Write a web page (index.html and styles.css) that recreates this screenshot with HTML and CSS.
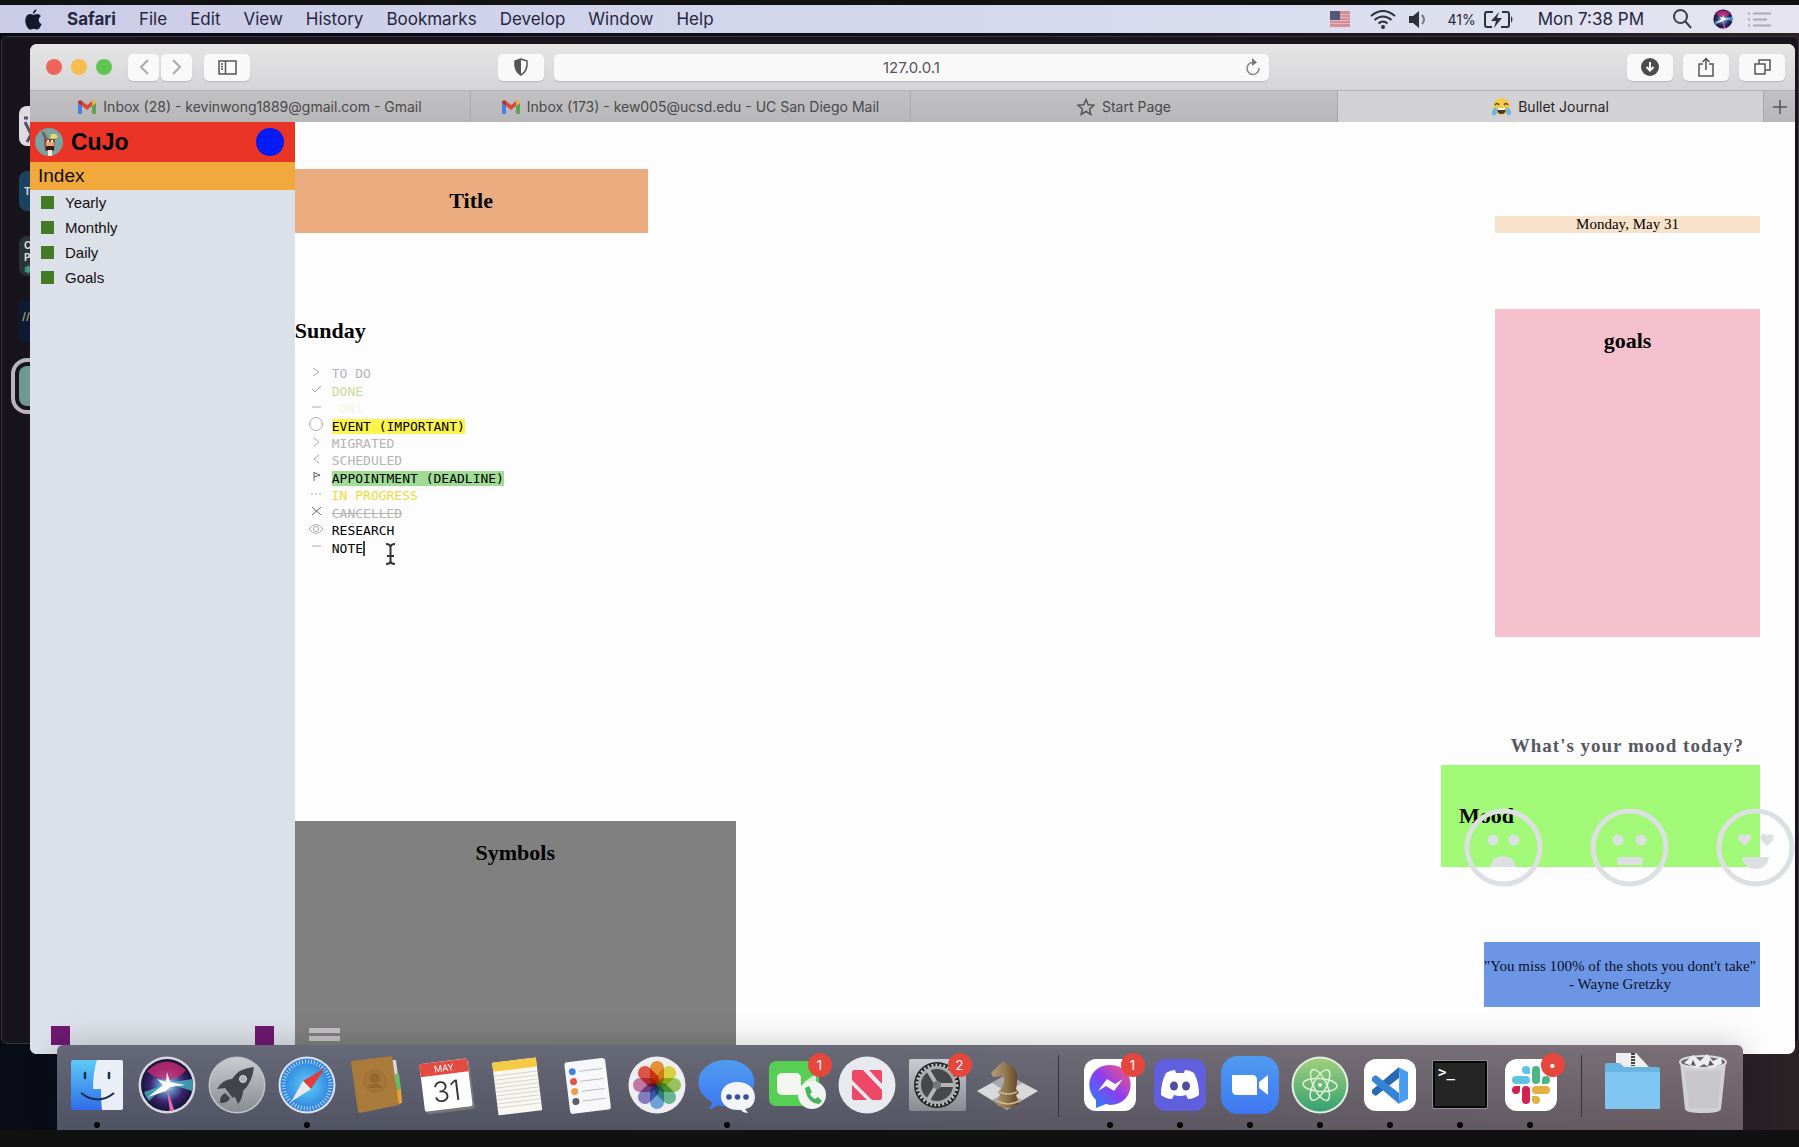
FILE: index.html
```html
<!DOCTYPE html>
<html lang="en">
<head>
<meta charset="utf-8">
<title>Bullet Journal</title>
<link rel="stylesheet" href="styles.css">
</head>
<body>
<svg class="defs" aria-hidden="true">
  <defs>
    <linearGradient id="silver" x1="0" y1="0" x2="0" y2="1"><stop offset="0" stop-color="#c9cbd0"/><stop offset="1" stop-color="#888c91"/></linearGradient>
    <linearGradient id="blue" x1="0" y1="0" x2="0" y2="1"><stop offset="0" stop-color="#4f9bf0"/><stop offset="1" stop-color="#3e78f2"/></linearGradient>
    <linearGradient id="sky" x1="0" y1="0" x2="0" y2="1"><stop offset="0" stop-color="#5ecbf8"/><stop offset="1" stop-color="#2f6ce8"/></linearGradient>
    <linearGradient id="atomg" x1="0" y1="0" x2="0" y2="1"><stop offset="0" stop-color="#a0cf7c"/><stop offset="1" stop-color="#35a273"/></linearGradient>
    <linearGradient id="msgr" x1="0" y1="1" x2="1" y2="0"><stop offset="0" stop-color="#1a8dfa"/><stop offset=".5" stop-color="#8b3df2"/><stop offset="1" stop-color="#ff5a75"/></linearGradient>
    <linearGradient id="gold" x1="0" y1="0" x2="1" y2="0"><stop offset="0" stop-color="#b59d76"/><stop offset=".5" stop-color="#957a52"/><stop offset="1" stop-color="#5e4224"/></linearGradient>
    <radialGradient id="siri"><stop offset="0" stop-color="#e9fbff"/><stop offset=".3" stop-color="#568fc2"/><stop offset=".65" stop-color="#3c2470"/><stop offset="1" stop-color="#151436"/></radialGradient>
    <radialGradient id="safari"><stop offset="0" stop-color="#5fd0f5"/><stop offset="1" stop-color="#2c7de0"/></radialGradient>
    <symbol id="gmail" viewBox="0 0 18 14">
      <path fill="#4a7de8" d="M0 3l4 3v8H1.500Q0 14 0 12.500z"/><path fill="#5da04f" d="M18 3l-4 3v8h2.500Q18 14 18 12.500z"/>
      <path fill="#d9493c" d="M4 1l5 4 5-4v5l-5 4-5-4z"/><path fill="#a8352f" d="M0 2q1-3 4-1v5L0 3z"/><path fill="#e4b23b" d="M18 2q-1-3-4-1v5l4-3z"/>
    </symbol>
    <symbol id="siriball" viewBox="0 0 60 60">
      <circle cx="30" cy="30" r="28.500" fill="#d9d7de"/><circle cx="30" cy="30" r="26" fill="url(#siri)"/>
      <path fill="#d02b72" opacity=".75" d="M10 16Q29-2 49 15 41 25 30 25 18 24 10 16z"/>
      <path fill="#4cc7d2" opacity=".7" d="M30 28l25-4q2 7 0 12zM30 29L7 37q2 6 5 9z"/>
      <path fill="#e66aad" d="M29 29l8 26-4 1z"/><path fill="#fff" d="M30 17l3 10 15 3-15 2-4 4-18 6 15-12-6-6 9 3z"/>
    </symbol>
  </defs>
</svg>

<header class="menubar">
  <nav class="menus" aria-label="Menu bar">
    <svg class="apple" width="17" height="21" viewBox="0 0 17 21"><path fill="#16182f" d="M11.500 0q0 3-3.600 5Q7.600 2 11.500 0zM8.600 6q2.700-1.500 5-.8 1.500.5 2.300 1.700-2.400 1.600-2.200 4.300.2 2.700 2.900 3.900-.8 2.500-2.500 4.500-1.400 1.500-3.300.7-2-.9-4.100 0-1.900.8-3.200-.6Q.300 16.300.300 11.800.500 5.600 5 5.100q1.500 0 3.600.9z"/></svg>
    <b>Safari</b><span>File</span><span>Edit</span><span>View</span><span>History</span><span>Bookmarks</span><span>Develop</span><span>Window</span><span>Help</span>
  </nav>
  <div class="status">
    <svg class="flag" width="20" height="16" viewBox="0 0 20 16"><path fill="#d58d98" d="M0 0h20v16H0z"/><path stroke="#e3b6bf" d="M0 3.500h20M0 6.500h20M0 9.500h20M0 12.500h20"/><path fill="#535775" d="M0 0h10v9H0z"/></svg>
    <svg class="wifi" width="26" height="19" viewBox="0 0 26 19" fill="none" stroke="#2e303c" stroke-width="2"><path d="M1 6q12-10 24 0M4.500 10q8.500-7 17 0M8.500 13.500q4.500-4 9 0"/><circle cx="13" cy="17" r="1"/></svg>
    <svg class="speaker" width="18" height="17" viewBox="0 0 18 17"><path fill="#2e303c" d="M0 5h4l6-5v17l-6-5H0z"/><path d="M13 4q4 4.500 0 9" fill="none" stroke="#777a86" stroke-width="2"/></svg>
    <span class="percent">41%</span>
    <svg class="battery" width="30" height="17" viewBox="0 0 30 17" fill="none" stroke="#2e303c" stroke-width="2"><path d="M9 1H3Q1 1 1 3v11q0 2 2 2h5M18 1h5q2 0 2 2v11q0 2-2 2h-6"/><path fill="#2e303c" stroke="none" d="M15 1L7 10h5l-2 7 8-10h-5zM27 5q3 3 0 7z"/></svg>
    <time>Mon 7:38 PM</time>
    <svg class="search" width="19" height="20" viewBox="0 0 19 20" fill="none" stroke="#3b3d47" stroke-width="2"><circle cx="7.500" cy="7.500" r="6.500"/><path d="M12 12l6 7"/></svg>
    <svg class="siri" width="22" height="22"><use href="#siriball"/></svg>
    <svg width="23" height="15" viewBox="0 0 23 15" stroke="#a9a9b8" stroke-width="2"><path d="M0 1.500h2M0 7.500h2M0 13.500h2M5 1.500h18M5 7.500h14M5 13.500h18"/></svg>
  </div>
</header>

<main class="desktop">
  <aside class="behind">
    <span class="server light"><svg width="40" height="40" viewBox="0 0 40 40" fill="none" stroke="#54506b" stroke-width="3"><path d="M6 16l10 20M20 14L8 36M5 12h4"/></svg></span>
    <span class="server navy">T</span>
    <span class="server slate">C<br>P<br><i>✱</i></span>
    <span class="server code">//</span>
    <span class="server current"></span>
  </aside>

  <section class="window">
    <div class="toolbar">
      <div class="lights"><i class="close"></i><i class="min"></i><i class="max"></i></div>
      <div class="history">
        <button aria-label="Back"><svg width="10" height="16" viewBox="0 0 10 16"><path d="M9 1L2 8l7 7" fill="none" stroke="#aaa9ab" stroke-width="2"/></svg></button>
        <button aria-label="Forward"><svg width="10" height="16" viewBox="0 0 10 16"><path d="M1 1l7 7-7 7" fill="none" stroke="#aaa9ab" stroke-width="2"/></svg></button>
      </div>
      <button class="wide" aria-label="Sidebar"><svg width="19" height="15" viewBox="0 0 19 15" fill="none" stroke="#555" stroke-width="1.500"><path d="M1 1h17v13H1zM7.500 1v13M3 4h2M3 6.500h2M3 9h2"/></svg></button>
      <div class="address">
        <button class="wide" aria-label="Privacy report"><svg width="16" height="18" viewBox="0 0 16 18"><path d="M8 1l6 2q1 10-6 14-7-4-6-14z" fill="none" stroke="#555" stroke-width="1.500"/><path d="M8 1v16Q1 13 2 3z" fill="#555"/></svg></button>
        <div class="urlbox">
          <input class="url" type="text" value="127.0.0.1" aria-label="Address">
          <svg class="reload" width="16" height="18" viewBox="0 0 16 18"><path d="M9 4.500A6 6 0 1 0 14 10" fill="none" stroke="#888" stroke-width="1.500"/><path d="M7 0l5 4.500L7 8z" fill="#777"/></svg>
        </div>
      </div>
      <div class="tools">
        <button class="wide" aria-label="Downloads"><svg width="18" height="18" viewBox="0 0 18 18"><circle cx="9" cy="9" r="9" fill="#4c4b4d"/><path d="M9 4v8M5.500 9L9 12.500 12.500 9" fill="none" stroke="#fff" stroke-width="2"/></svg></button>
        <button class="wide" aria-label="Share"><svg width="16" height="20" viewBox="0 0 16 20" fill="none" stroke="#555" stroke-width="1.500"><path d="M5 7H1v12h14V7h-4M8 13V2M4.500 5L8 1.500 11.500 5"/></svg></button>
        <button class="wide" aria-label="Show tabs"><svg width="17" height="16" viewBox="0 0 17 16" fill="none" stroke="#555" stroke-width="1.500"><path d="M1 5h10v10H1zM5 5V1h11v10h-5"/></svg></button>
      </div>
    </div>

    <nav class="tabs" aria-label="Tabs">
      <a href="#"><svg width="18" height="14"><use href="#gmail"/></svg>Inbox (28) - kevinwong1889@gmail.com - Gmail</a>
      <a href="#"><svg width="18" height="14"><use href="#gmail"/></svg>Inbox (173) - kew005@ucsd.edu - UC San Diego Mail</a>
      <a href="#"><svg width="18" height="18" viewBox="0 0 18 18"><path d="M9 1.500l2.200 5.200 5.600.5-4.200 3.700 1.200 5.500L9 13.500l-4.800 2.900 1.200-5.500L1.200 7.200l5.600-.5z" fill="none" stroke="#555" stroke-width="1.500"/></svg>Start Page</a>
      <a href="#" class="active"><svg width="19" height="18" viewBox="0 0 19 18"><circle cx="9.500" cy="8.500" r="8.500" fill="#f2cb4a"/><path d="M3 7q2-3 4 0M12 7q2-3 4 0" fill="none" stroke="#5c4523" stroke-width="1.500"/><path d="M5 10h9q0 6-4.500 6T5 10z" fill="#4c3420"/><path d="M5.500 10h8v2h-8z" fill="#fff"/><path d="M4 9q-5 3-4 7 3 3 5-1zM15 9q5 3 4 7-3 3-5-1z" fill="#66b4e8"/></svg>Bullet Journal</a>
      <button aria-label="New tab"><svg width="14" height="14" viewBox="0 0 14 14"><path d="M7 0v14M0 7h14" stroke="#555" stroke-width="1.500"/></svg></button>
    </nav>

    <div class="page">
      <aside class="sidebar">
        <header class="brand">
          <svg width="28" height="28" viewBox="0 0 28 28"><circle cx="14" cy="14" r="14" fill="#7ba2a2"/><path fill="#8c4a34" d="M9 11h11l-1 12H10z"/><path fill="#7c5a62" d="M6 3l3 1 4 7-3 1z"/><path fill="#e3dd60" d="M16 6h5l2 3-4 2-4-1z"/><path fill="#e2a877" d="M11 14h8v4h-8z"/><path fill="#3d1c1c" d="M11 18h8v4h-8z"/><path fill="#f1e7d2" d="M13 22h4v6h-4zM12 12h2v2h-2zM16 12h2v2h-2z"/></svg>
          <h1>CuJo</h1>
          <button class="blob" aria-label="Profile"></button>
        </header>
        <h2>Index</h2>
        <ul class="index">
          <li><a href="#">Yearly</a></li><li><a href="#">Monthly</a></li><li><a href="#">Daily</a></li><li><a href="#">Goals</a></li>
        </ul>
        <footer class="corners"><i></i><i></i></footer>
      </aside>

      <div class="journal">
        <section class="left">
          <h2 class="title">Title</h2>
          <h2 class="day">Sunday</h2>
          <ul class="bullets">
            <li><svg viewBox="0 0 16 16"><path d="M5 4l6 4-6 4"/></svg><span class="muted">TO DO</span></li>
            <li><svg viewBox="0 0 16 16"><path d="M4 8l3 3 6-6"/></svg><span class="done">DONE</span></li>
            <li><svg viewBox="0 0 16 16"><path d="M4 8h9"/></svg><span class="ghost">&nbsp;ONi</span></li>
            <li><svg viewBox="0 0 16 16"><circle cx="8" cy="8" r="6.500"/></svg><span class="event">EVENT (IMPORTANT)</span></li>
            <li><svg viewBox="0 0 16 16"><path d="M6 4l5 4-5 4"/></svg><span class="muted">MIGRATED</span></li>
            <li><svg viewBox="0 0 16 16"><path d="M11 4L6 8l5 4"/></svg><span class="muted">SCHEDULED</span></li>
            <li><svg class="dark" viewBox="0 0 16 16"><path d="M6 13V4M6 4.500l6 2.500-6 2"/></svg><span class="deadline">APPOINTMENT (DEADLINE)</span></li>
            <li><svg viewBox="0 0 16 16"><path d="M3 8h2M7 8h2M11 8h2"/></svg><span class="progress">IN PROGRESS</span></li>
            <li><svg class="dark" viewBox="0 0 16 16"><path d="M4 4l9 8M13 4l-9 8"/></svg><s class="muted">CANCELLED</s></li>
            <li><svg viewBox="0 0 16 16"><path d="M1 8q7-9 14 0-7 9-14 0z"/><circle cx="8" cy="8" r="2.500"/></svg><span>RESEARCH</span></li>
            <li><svg viewBox="0 0 16 16"><path d="M4 8h9"/></svg><span class="typing">NOTE</span><svg class="pointer" viewBox="0 0 11 22"><path d="M1 1q4 0 4.500 3Q6 1 10 1M5.500 4v14M1 21q4 0 4.500-3 .500 3 4.500 3M2 13h7"/></svg></li>
          </ul>
          <section class="symbols">
            <h2>Symbols</h2>
            <button class="menu" aria-label="Menu"></button>
          </section>
        </section>

        <section class="right">
          <time class="date">Monday, May 31</time>
          <section class="goals"><h2>goals</h2></section>
          <h3>What's your mood today?</h3>
          <section class="mood">
            <h2>Mood</h2>
            <div class="faces">
              <button aria-label="Sad"><svg viewBox="0 0 79 79"><circle class="ring" cx="39.500" cy="39.500" r="36.500"/><circle cx="29" cy="32" r="5.500"/><circle cx="50" cy="32" r="5.500"/><path d="M26 59q2-11 13-11t13 11z"/></svg></button>
              <button aria-label="Neutral"><svg viewBox="0 0 79 79"><circle class="ring" cx="39.500" cy="39.500" r="36.500"/><circle cx="28" cy="32" r="5.500"/><circle cx="51" cy="32" r="5.500"/><rect x="27" y="49" width="26" height="8" rx="3"/></svg></button>
              <button aria-label="Happy"><svg viewBox="0 0 79 79"><circle class="ring" cx="39.500" cy="39.500" r="36.500"/><path d="M28.500 38l-6-6q-2-4 2-6 3 0 4 2 1-2 4-2 4 2 2 6zM51 38l-6-6q-2-4 2-6 3 0 4 2 1-2 4-2 4 2 2 6zM26 49h27q-2 12-13.500 12T26 49z"/></svg></button>
            </div>
          </section>
          <blockquote>"You miss 100% of the shots you dont't take"<br>- Wayne Gretzky</blockquote>
        </section>
      </div>
    </div>
  </section>

  <nav class="dock" aria-label="Dock">
    <button class="open" aria-label="Finder"><svg viewBox="0 0 60 60"><rect x="4" y="5" width="52" height="50" rx="2" fill="url(#sky)"/><path fill="#e9eef7" d="M30 5h24q2 0 2 2v46q0 2-2 2H35q-1-8-1-21h-8Q26 17 30 5z"/><path d="M18 18v5M42 18v5" stroke="#17304f" stroke-width="2.500" stroke-linecap="round"/><path d="M14 38q17 13 33 0" fill="none" stroke="#172d52" stroke-width="2"/></svg></button>
    <button aria-label="Siri"><svg viewBox="0 0 60 60"><use href="#siriball"/></svg></button>
    <button aria-label="Launchpad"><svg viewBox="0 0 60 60"><circle cx="30" cy="30" r="28.500" fill="#bfc2c7"/><circle cx="30" cy="30" r="27" fill="url(#silver)"/><path fill="#434449" d="M47 12q-15 1-22 12-9 0-15 10l8-1 7 9-1 1 4-1 3 7q5-6 5-13 9-8 11-24zM18 38l5 5q-1 5-10 5 0-8 5-10z"/><circle cx="36" cy="24" r="3.500" fill="#aeb1b6" stroke="#ddd"/></svg></button>
    <button class="open" aria-label="Safari"><svg viewBox="0 0 60 60"><circle cx="30" cy="30" r="28.500" fill="#dfe3ee"/><circle cx="30" cy="30" r="26.500" fill="url(#safari)"/><circle cx="30" cy="30" r="23.500" fill="none" stroke="#b8dcf5" stroke-width="4" stroke-dasharray="1 2"/><path fill="#e13c3a" d="M48 13L34 34l-8-8z"/><path fill="#e9e9ed" d="M26 26l8 8-20 13z"/></svg></button>
    <button aria-label="Contacts"><svg viewBox="0 0 60 60"><path fill="#d8d8d8" d="M45 5l4 0 3 24-5 1z"/><path fill="#62bf63" d="M48 19l4 0 2 15-5 1z"/><path fill="#e3a53a" d="M49 35l5-1 1 14-7 2z"/><path fill="#aa7a3a" d="M4 6l41-5 7 49-39 8q-2 0-2-2L4 8z"/><circle cx="28" cy="26" r="11" fill="#a67636" stroke="#9a6d32"/><circle cx="28" cy="23" r="5" fill="#94672e"/><path fill="#94672e" d="M20 33q8-9 16 0z"/></svg></button>
    <button aria-label="Calendar"><svg viewBox="0 0 60 60"><g transform="rotate(-7 30 30)"><rect x="7" y="8" width="48" height="49" rx="2" fill="#777"/><rect x="5" y="6" width="48" height="48" rx="2" fill="#fff"/><path fill="#e34b42" d="M5 6h48v13H5z"/><text x="29" y="16" class="cal-month">MAY</text><text x="29" y="46" class="cal-day">31</text></g></svg></button>
    <button aria-label="Notes"><svg viewBox="0 0 60 60"><g transform="rotate(-7 30 30)"><rect x="8" y="5" width="44" height="53" rx="1" fill="#f8f7f2"/><path fill="#f5cb45" d="M8 5h44v9H8z"/><path stroke="#d6d5d0" d="M8 18.500h44M8 22.500h44M8 26.500h44M8 30.500h44M8 34.500h44M8 38.500h44M8 42.500h44M8 46.500h44M8 50.500h44"/></g></svg></button>
    <button aria-label="Reminders"><svg viewBox="0 0 60 60"><g transform="rotate(-7 30 30)"><rect x="10" y="5" width="41" height="52" rx="3" fill="#f8f8fa"/><circle cx="17" cy="15" r="3.500" fill="#4680ee"/><circle cx="17" cy="25" r="3.500" fill="#e3514b"/><circle cx="17" cy="35" r="3.500" fill="#ee9f4b"/><circle cx="17" cy="45" r="3.500" fill="#5b5e63"/><path stroke="#bbb" d="M24 15.500h23M24 25.500h23M24 35.500h23M24 45.500h23"/></g></svg></button>
    <button aria-label="Photos"><svg viewBox="0 0 60 60"><circle cx="30" cy="30" r="28.500" fill="#eeeef2"/><g class="petals"><rect x="23" y="6" width="14" height="24" rx="7" fill="#f19a38"/><rect x="23" y="6" width="14" height="24" rx="7" fill="#e9de45" transform="rotate(45 30 30)"/><rect x="23" y="6" width="14" height="24" rx="7" fill="#a3d060" transform="rotate(90 30 30)"/><rect x="23" y="6" width="14" height="24" rx="7" fill="#6fc297" transform="rotate(135 30 30)"/><rect x="23" y="6" width="14" height="24" rx="7" fill="#76aee2" transform="rotate(180 30 30)"/><rect x="23" y="6" width="14" height="24" rx="7" fill="#8c86ca" transform="rotate(225 30 30)"/><rect x="23" y="6" width="14" height="24" rx="7" fill="#cf7fac" transform="rotate(270 30 30)"/><rect x="23" y="6" width="14" height="24" rx="7" fill="#ea5a4c" transform="rotate(315 30 30)"/></g></svg></button>
    <button class="open" aria-label="Messages"><svg viewBox="0 0 60 60"><path fill="url(#blue)" d="M30 5c36 0 37 43 0 46-4 0-7 0-10-1q-3 4-9 4 4-3 4-7C-8 35-1 5 30 5z"/><path fill="#f4f5fa" d="M40 27c23 0 22 26 8 27l3 4q-5 0-7-3C18 57 18 27 40 27z"/><g fill="#35519e"><circle cx="32" cy="42" r="2.800"/><circle cx="40.500" cy="42" r="2.800"/><circle cx="49" cy="42" r="2.800"/></g></svg></button>
    <button aria-label="FaceTime"><svg viewBox="0 0 60 60"><rect x="2" y="6" width="50" height="45" rx="7" fill="#57cf55"/><rect x="10" y="18" width="24" height="22" rx="5" fill="#f4f6f2"/><path fill="#d7efd3" d="M37 27l12-8v20z"/><circle cx="45" cy="40" r="14" fill="#f1f4f1"/><path fill="#45b65b" d="M38 33l4-2 3 6-2 2q2 4 5 5l3-2 4 4-3 3Q40 48 38 33z"/></svg><span class="badge">1</span></button>
    <button aria-label="News"><svg viewBox="0 0 60 60"><circle cx="30" cy="30" r="28.500" fill="#e9e9f0"/><path fill="#ee4868" d="M17 15h9l19 20v8q0 2-2 2h-8L15 25v-8q0-2 2-2zM32 15h11q2 0 2 2v12zM15 30l15 15H17q-2 0-2-2z"/></svg></button>
    <button aria-label="System Preferences"><svg viewBox="0 0 60 60"><rect x="2" y="4" width="57" height="52" rx="2" fill="url(#silver)"/><circle cx="30" cy="30" r="23" fill="#222325"/><circle cx="30" cy="30" r="17.500" fill="#47484b" stroke="#aaa" stroke-width="3"/><circle cx="30" cy="30" r="20" fill="none" stroke="#c1c1c2" stroke-width="3" stroke-dasharray="2 2"/><path d="M30 30h17M30 30L21 15M30 30l-9 15" stroke="#b4b5b7" stroke-width="4"/><circle cx="30" cy="30" r="4" fill="#77787b"/></svg><span class="badge">2</span></button>
    <button aria-label="Chess"><svg viewBox="0 0 60 60"><path fill="#a6a8aa" d="M0 36l30-17 31 17-31 19z"/><path fill="#eee" d="M15 28l15 9-15 8L0 36zM45 28l16 8-16 9-15-8z" opacity=".7"/><path fill="url(#gold)" d="M24 34q5-8 2-13l-10 1-2-4 9-9 4-3 2 3q15 2 10 25l3 4-3 2 3 9q-12 8-23 0l4-9-2-3z"/><path d="M22 37q9 4 18 0M20 46q11 6 22 0" stroke="#d0b98f" fill="none" stroke-width="1.500"/></svg></button>
    <hr>
    <button class="open" aria-label="Messenger"><svg viewBox="0 0 60 60"><rect x="4" y="4" width="52" height="52" rx="12" fill="#fff"/><path fill="url(#msgr)" d="M30 10c28 0 27 40 0 40l-4-1-10 4v-8C3 32 10 10 30 10z"/><path fill="#fff" d="M18 36l9-12 8 5 8-5-9 12-8-5z"/></svg><span class="badge">1</span></button>
    <button class="open" aria-label="Discord"><svg viewBox="0 0 60 60"><rect x="4" y="4" width="52" height="52" rx="12" fill="#6060df"/><path fill="#fff" d="M16 18q5-3 9-3l1 3h8l1-3q5 0 9 3 5 9 5 22-5 4-11 4l-2-4q-6 2-12 0l-2 4q-6 0-11-4 0-13 5-22z"/><ellipse cx="24" cy="31" rx="4" ry="4.500" fill="#4f4f9f"/><ellipse cx="36" cy="31" rx="4" ry="4.500" fill="#4f4f9f"/></svg></button>
    <button class="open" aria-label="Zoom"><svg viewBox="0 0 60 60"><rect x="1" y="1" width="58" height="58" rx="17" fill="url(#blue)"/><path fill="#fff" d="M12 20h20q5 0 5 5v15H17q-5 0-5-5zM39 27l9-7v20l-9-7z"/></svg></button>
    <button class="open" aria-label="Atom"><svg viewBox="0 0 60 60"><circle cx="30" cy="30" r="28.500" fill="#e3eee0"/><circle cx="30" cy="30" r="26.500" fill="url(#atomg)"/><g fill="none" stroke="#dff1d5" stroke-width="1.500"><ellipse cx="30" cy="30" rx="17" ry="6.500" transform="rotate(4 30 30)"/><ellipse cx="30" cy="30" rx="17" ry="6.500" transform="rotate(64 30 30)"/><ellipse cx="30" cy="30" rx="17" ry="6.500" transform="rotate(118 30 30)"/></g><circle cx="30" cy="30" r="2" fill="#e7f6dd"/></svg></button>
    <button class="open" aria-label="Visual Studio Code"><svg viewBox="0 0 60 60"><rect x="4" y="4" width="52" height="52" rx="12" fill="#fff"/><path fill="#2868b4" d="M39 12v11L17 40q-2 2-5-2v-3z"/><path fill="#3584d6" d="M39 49V38L17 21q-2-2-5 2v3z"/><path fill="#489df0" d="M38 12l10 5v27l-10 5q2-3 1-18 1-15-1-19z"/></svg></button>
    <button class="open" aria-label="Terminal"><svg viewBox="0 0 60 60"><rect x="2" y="5" width="56" height="49" rx="2" fill="#8f8e92"/><rect x="3" y="6" width="54" height="47" rx="1" fill="#080808"/><rect x="5" y="8" width="50" height="43" fill="#252525"/><text x="8" y="22" class="term">&gt;_</text></svg></button>
    <button class="open" aria-label="Slack"><svg viewBox="0 0 60 60"><rect x="5" y="4" width="52" height="52" rx="12" fill="#fff"/><g><path fill="#5fc3e4" d="M30 19h-4a4 4 0 1 1 4-4z"/><rect x="12" y="21" width="18" height="8" rx="4" fill="#5fc3e4"/><rect x="32" y="11" width="8" height="18" rx="4" fill="#4fb583"/><path fill="#4fb583" d="M42 29v-4a4 4 0 1 1 4 4z"/><path fill="#d02354" d="M20 31v4a4 4 0 1 1-4-4z"/><rect x="22" y="31" width="8" height="18" rx="4" fill="#d02354"/><rect x="32" y="31" width="18" height="8" rx="4" fill="#e4b140"/><path fill="#e4b140" d="M32 41h4a4 4 0 1 1-4 4z"/></g></svg><span class="badge">•</span></button>
    <hr>
    <button aria-label="Downloads"><svg viewBox="0 0 60 60"><path fill="#eee" d="M13-2h20l13 14v8H13z"/><path stroke="#444" stroke-width="4" stroke-dasharray="2 1" d="M30-2v13"/><path fill="#68b5e4" d="M2 10q0-2 2-2h13l4 4h34q2 0 2 2v10H2z"/><path fill="#7fc6f1" d="M2 17h55v36q0 1-1 1H3q-1 0-1-1z"/></svg></button>
    <button aria-label="Trash"><svg viewBox="0 0 60 60"><path fill="#d1d1d3" d="M7 7h46l-5 47q-1 4-18 4T12 54z"/><path fill="#bdbdbf" d="M12 16h36l-3 37H16z" opacity=".5"/><ellipse cx="30" cy="7" rx="23" ry="6" fill="#66666b" stroke="#dcdcde" stroke-width="2"/><path fill="#eee" d="M11 8l9-8 7 6 7-7 6 7 8-4 1 7-12 4-6-4-7 4z"/><path fill="#555" d="M20 5l3 6-5-1zM37 5l4 5-6 1z"/></svg></button>
  </nav>
</main>
</body>
</html>
```

FILE: styles.css
```css
* { box-sizing: border-box; }
body {
  margin: 0;
  min-height: 100vh;
  display: flex;
  flex-direction: column;
  background: #111;
  border: solid #111;
  border-width: 5px 0 17px;
  font-family: Inter, "Liberation Sans", sans-serif;
  overflow: hidden;
}
h1, h2, h3, ul, blockquote { margin: 0; padding: 0; }
ul { list-style: none; }
button { border: 0; padding: 0; background: none; font: inherit; color: inherit; }
svg { display: block; flex: none; }
.defs { position: absolute; width: 0; height: 0; }

/* System menu bar */
.menubar {
  display: flex;
  justify-content: space-between;
  align-items: center;
  height: 28px;
  padding: 0 28px 0 25px;
  background: linear-gradient(90deg, #cccbe8, #d5daee 60%, #e6e4f0);
  color: #25273d;
  font-size: 17px;
}
.menus { display: flex; align-items: center; gap: 23px; }
.apple { margin-right: 2px; }
.status { display: flex; align-items: center; }
.flag { margin-right: 20px; }
.wifi { margin-right: 13px; }
.speaker { margin-right: 20px; }
.percent { margin-right: 8px; font-size: 14px; }
.battery { margin-right: 24px; }
.status time { margin-right: 29px; }
.search { margin-right: 20px; }
.siri { margin-right: 14px; }

.desktop {
  flex: 1;
  position: relative;
  display: flex;
  padding: 11px 4px 76px 30px;
  background: linear-gradient(90deg, #090b17, #120f1c 60%, #2b2226);
}

/* Chat application behind the browser */
.behind {
  position: absolute;
  inset: 3px 0 86px 1px;
  display: flex;
  flex-direction: column;
  gap: 25px;
  padding: 69px 0 0 17px;
  border: 1px solid #38353f;
  border-radius: 6px;
  background: #17151b;
}
.server {
  width: 40px;
  height: 40px;
  flex: none;
  border-radius: 8px;
  padding-left: 5px;
  color: #ddd;
  font-size: 10px;
  font-weight: 700;
  line-height: 12px;
}
.server i { color: #3c9f7c; font-style: normal; }
.light { background: #dedbe2; padding: 0; }
.navy { background: #1c4262; line-height: 40px; }
.slate { background: #2a3336; padding-top: 3px; }
.code { background: #0e1a34; color: #999c6d; line-height: 30px; padding-left: 3px; border-radius: 2px; }
.current { background: #6f9892; outline: 4px solid #b9b5be; outline-offset: 4px; }

/* Browser window */
.window {
  position: relative;
  flex: 1;
  display: flex;
  flex-direction: column;
  overflow: hidden;
  border-radius: 7px;
  background: #fdfdfd;
}
.toolbar {
  display: grid;
  grid-template-columns: auto auto auto 1fr auto;
  align-items: center;
  height: 46px;
  padding: 0 10px 0 16px;
  background: linear-gradient(#e6e5e6, #d5d4d6);
}
.toolbar button, .urlbox {
  display: flex;
  align-items: center;
  justify-content: center;
  height: 27px;
  border-radius: 5px;
  background: #f9f9fa;
  box-shadow: 0 1px 1px #b9b8ba;
}
.lights { display: flex; gap: 9px; margin-right: 16px; }
.lights i { width: 16px; height: 16px; border-radius: 50%; }
.close { background: #ed665e; }
.min { background: #f4bd4e; }
.max { background: #61c554; }
.history { display: flex; gap: 2px; margin-right: 12px; }
.history button { width: 31px; }
.toolbar .wide { width: 46px; }
.address {
  display: grid;
  grid-template-columns: 46px 1fr;
  gap: 10px;
  width: 56%;
  margin-left: 18%;
}
.urlbox { position: relative; }
.url {
  width: 100%;
  border: 0;
  padding: 0;
  background: none;
  color: #555;
  font: 15px Inter, sans-serif;
  text-align: center;
}
.reload { position: absolute; right: 8px; }
.tools { display: flex; gap: 10px; }

.tabs {
  display: grid;
  grid-template-columns: 441fr 440fr 427fr 426fr 31px;
  height: 32px;
  background: linear-gradient(#c1c0c2, #b7b6b8);
  border-top: 1px solid #b3b2b4;
}
.tabs a, .tabs button { display: flex; align-items: center; justify-content: center; }
.tabs a {
  gap: 7px;
  min-width: 0;
  white-space: nowrap;
  border-right: 1px solid #a8a7a9;
  color: #4a494b;
  font-size: 14px;
  text-decoration: none;
}
.tabs .active { background: #d2d1d3; color: #272628; }

/* Journal page */
.page { flex: 1; display: grid; grid-template-columns: 15% 1fr; }
.sidebar {
  display: flex;
  flex-direction: column;
  background: #dce0e8;
  color: #101010;
  font-family: "Liberation Sans", Arial, sans-serif;
}
.brand { display: flex; align-items: center; height: 40px; padding: 0 11px 0 5px; background: #ea3426; }
.brand h1 { flex: 1; padding-left: 8px; font-size: 23px; color: #000; }
.brand .blob { width: 28px; height: 28px; border-radius: 50%; background: #001bf5; }
.sidebar h2 { height: 28px; padding-left: 8px; background: #f1a93c; font-size: 19px; font-weight: 400; line-height: 28px; }
.index { flex: 1; }
.index li { display: flex; align-items: center; height: 25px; padding-left: 11px; }
.index li::before { content: ""; width: 13px; height: 13px; margin-right: 11px; background: #437a25; }
.index a { color: inherit; font-size: 15px; text-decoration: none; }
.corners { display: flex; justify-content: space-between; padding: 0 21px 9px; }
.corners i { width: 19px; height: 19px; background: #701873; }

.journal {
  display: flex;
  justify-content: space-between;
  padding-right: 35px;
  color: #000;
  font-family: "Liberation Serif", "Times New Roman", serif;
}
.journal h2 { font-size: 22px; line-height: 26px; }
.left { width: 441px; display: flex; flex-direction: column; }
.journal .title { width: 80%; margin-top: 47px; background: #ebad80; line-height: 64px; text-align: center; }
.journal .day { margin-top: 85px; }
.bullets {
  position: relative;
  display: grid;
  grid-template-rows: repeat(11, minmax(0, 1fr));
  height: 192px;
  margin-top: 21px;
  padding-left: 13px;
  font: 13px/15px "DejaVu Sans Mono", monospace;
}
.bullets li { display: flex; align-items: center; gap: 8px; }
.bullets svg { width: 16px; height: 16px; margin-bottom: 4px; fill: none; stroke: #aaa; stroke-width: 1; }
.bullets .dark { stroke: #666; }
.bullets .muted { color: #b5b5b5; }
.bullets .done { color: #c6dc96; }
.bullets .ghost { color: #f1f4e2; }
.bullets .event { background: #fcf44c; }
.bullets .deadline { background: #a0dc96; }
.bullets .progress { color: #efdc3c; }
.typing { border-right: 2px solid #444; }
.bullets .pointer { position: absolute; left: 90px; bottom: -12px; width: 11px; height: 22px; stroke: #333; stroke-width: 2; }

.symbols {
  display: flex;
  flex-direction: column;
  justify-content: space-between;
  height: 233px;
  margin-top: auto;
  padding: 19px 0 13px;
  background: #808080;
  text-align: center;
}
.menu { width: 31px; height: 13px; margin-left: 14px; border: solid #c5c2c5; border-width: 5px 0; }

.right { width: 319px; display: flex; flex-direction: column; align-items: flex-end; }
.date { width: 265px; margin-top: 94px; background: #f8e2cb; font-size: 15px; line-height: 17px; text-align: center; }
.goals { width: 265px; height: 328px; margin-top: 76px; padding-top: 19px; background: #f6c1cf; text-align: center; }
.right h3 { margin: 98px 16px 8px 0; color: #56595f; font-size: 19px; line-height: 22px; letter-spacing: 1px; }
.mood { position: relative; width: 319px; height: 102px; padding: 38px 18px; background: #a2f977; }
.faces { position: absolute; left: 23px; top: 43px; display: flex; gap: 47px; }
.faces svg { width: 79px; height: 79px; fill: #dce0e2; }
.ring { fill: none; stroke: #dce0e2; stroke-width: 5; }
blockquote {
  display: grid;
  place-content: center;
  width: 276px;
  height: 65px;
  margin-top: 75px;
  padding-right: 4px;
  background: #6d95e6;
  color: #0a1024;
  font-size: 15px;
  line-height: 18px;
  text-align: center;
  white-space: nowrap;
}

/* Dock */
.dock {
  position: absolute;
  bottom: 0;
  left: 50%;
  transform: translateX(-50%);
  display: flex;
  gap: 10px;
  height: 85px;
  padding: 10px 10px 0;
  border-radius: 6px 6px 0 0;
  background: linear-gradient(#ffffff18, #00000010), linear-gradient(90deg, #55586a, #5a5b69 50%, #6f6168);
  box-shadow: 0 -2px 30px #00000030;
}
.dock button { position: relative; width: 60px; height: 60px; flex: none; }
.dock svg { width: 60px; height: 60px; overflow: visible; }
.dock .open::after {
  content: "";
  position: absolute;
  left: 27px;
  top: 67px;
  width: 6px;
  height: 6px;
  border-radius: 50%;
  background: #000;
}
.dock hr { width: 23px; height: 62px; margin: 0; border: 0; background: linear-gradient(#34343c, #34343c) center / 1px 100% no-repeat; }
.badge {
  position: absolute;
  left: 41px;
  top: -2px;
  width: 24px;
  height: 24px;
  border-radius: 50%;
  background: #e5473c;
  color: #fff;
  font-size: 13px;
  line-height: 24px;
  text-align: center;
}
.petals rect { mix-blend-mode: multiply; }
.cal-month { fill: #fff; font-size: 9px; text-anchor: middle; }
.cal-day { fill: #333; font-size: 28px; font-weight: 300; text-anchor: middle; }
.term { fill: #fff; font: 700 14px "DejaVu Sans Mono", monospace; }
```
